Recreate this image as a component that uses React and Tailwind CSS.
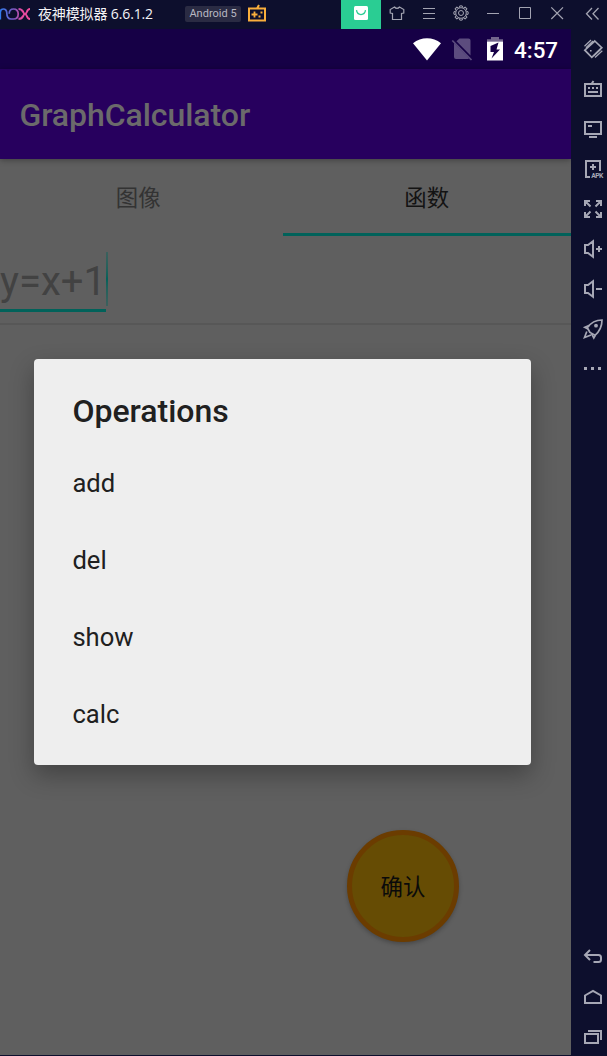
const OPERATIONS = ["add", "del", "show", "calc"];

function Glyph({ children, className = "" }) {
  return (
    <svg
      viewBox="0 0 20 20"
      className={`h-5 w-5 shrink-0 overflow-visible ${className}`}
      fill="none"
      stroke="#a6a7b5"
      strokeWidth="2"
    >
      {children}
    </svg>
  );
}

function SideCell({ children }) {
  return <div className="flex h-10 shrink-0 items-center pl-3">{children}</div>;
}

function TopCell({ children }) {
  return (
    <div className="flex h-[27px] w-8 shrink-0 items-center justify-center pb-px">
      <svg viewBox="0 0 16 16" className="h-4 w-4" fill="none" stroke="#a3a4b2" strokeWidth="1">
        {children}
      </svg>
    </div>
  );
}

function GearTeeth() {
  return [0, 45, 90, 135, 180, 225, 270, 315].map((a) => (
    <path key={a} d="M6.3 2.6L6.8 .9H9.2L9.7 2.6" transform={`rotate(${a} 8 8)`} />
  ));
}

function TitleBar() {
  return (
    <header className="flex h-[29px] w-full shrink-0 bg-[#0d0f2d]">
      <div className="flex h-[27px] w-[341px] items-center">
        <svg viewBox="0 0 30 12" className="h-3 w-[30px] shrink-0" fill="none" strokeWidth="1.7">
          <defs>
            <linearGradient id="nox" gradientUnits="userSpaceOnUse" x1="0" x2="30" y1="0" y2="0">
              <stop offset="0" stopColor="#2f7bf0" />
              <stop offset=".5" stopColor="#8355bd" />
              <stop offset=".7" stopColor="#e14aa0" />
              <stop offset="1" stopColor="#f34b9c" />
            </linearGradient>
          </defs>
          <g stroke="url(#nox)">
            <path d="M.3 11.5V4.5C.3 2 1.5 1 3.2 1C5.5 1 6.8 2.5 6.8 5C6.8 9 8.5 11 11 11H13.5C16.3 11 18.2 9 18.2 6S16.3 1 13.5 1C10.5 1 9.2 3 9.2 5.8" />
            <path d="M18.5 1C21.5 1 22.3 2 23.2 4C23.8 5.5 24.3 6 25 6C25.7 6 26.2 5.5 26.8 4C27.5 2 28.3 1 30 1M18.5 11C21.5 11 22.3 10 23.2 8C23.8 6.5 24.3 6 25 6C25.7 6 26.2 6.5 26.8 8C27.5 10 28.3 11 30 11" strokeWidth="2" />
          </g>
        </svg>
        <span className="ml-2 w-[147px] whitespace-nowrap font-['Open_Sans','Noto_Sans_CJK_SC',sans-serif] text-[14px] leading-5 tracking-[-0.13px] text-[#f4f4f7]">
          夜神模拟器 6.6.1.2
        </span>
        <span className="flex h-4 w-14 shrink-0 items-center justify-center rounded-[2px] bg-[#2a2b43] pt-px font-[Roboto,sans-serif] text-[11px] text-[#b8b8c2]">
          Android 5
        </span>
        <svg viewBox="0 0 20 18" className="mb-0.5 ml-1.5 h-[18px] w-5 shrink-0" fill="none" stroke="#f9ae3c" strokeWidth="2">
          <path d="M2 4.5H18V16.5H2ZM10 4.5L12 1" />
          <path d="M4.5 10.5H10.5M7.5 7.5V13.5" strokeWidth="1.8" />
          <path d="M13.5 8.5H15.5M11.5 12.5H13.5" />
        </svg>
      </div>
      <div className="flex h-[29px] w-10 shrink-0 justify-center bg-[#2acd93] pt-1.5">
        <svg viewBox="0 0 14 14" className="h-3.5 w-3.5">
          <rect width="14" height="14" rx="1.5" fill="#fff" />
          <path d="M2.5 4.2C3.3 10 10.7 10 11.5 4.2" fill="none" stroke="#2acd93" strokeWidth="1.3" />
        </svg>
      </div>
      <TopCell>
        <path d="M5.5 2L1.2 4.5V8L3.5 8.5V14.5H12.5V8.5L14.8 8V4.5L10.5 2C9 3.8 7 3.8 5.5 2Z" strokeWidth="1.2" />
      </TopCell>
      <TopCell>
        <path d="M2 3.5H14M2 8.5H14M2 13.5H14" />
      </TopCell>
      <TopCell>
        <circle cx="8" cy="8" r="5.3" />
        <circle cx="8" cy="8" r="2.5" />
        <GearTeeth />
      </TopCell>
      <TopCell>
        <path d="M2 8.5H14" />
      </TopCell>
      <TopCell>
        <path d="M2.5 2.5H13.5V13.5H2.5Z" />
      </TopCell>
      <TopCell>
        <path d="M2.3 2.3L14 14M14 2.3L2.3 14" strokeWidth="1.2" />
      </TopCell>
      <div className="flex h-[27px] items-center pl-[11px]">
        <svg viewBox="0 0 16 16" className="h-4 w-4" fill="none" stroke="#a3a4b2" strokeWidth="1.3">
          <path d="M8 2L2.5 7.7L8 13.5M14.5 2L9 7.7L14.5 13.5" />
        </svg>
      </div>
    </header>
  );
}

function StatusBar() {
  return (
    <div className="flex h-10 shrink-0 items-center bg-[#160046] pl-[413px]">
      <svg viewBox="0 0 28 23" className="h-[23px] w-7 shrink-0">
        <path d="M0 5.2C8-1.5 20-1.5 28 5.2L14 22.5Z" fill="#fff" />
      </svg>
      <svg viewBox="0 0 22 24" className="ml-[10px] h-6 w-[22px] shrink-0">
        <path d="M8.5 1.5H17.5Q19.5 1.5 19.5 3.5V18.5L5.5 4.3ZM3 6L18 21.2Q17.5 22 17 22H5Q3 22 3 20Z" fill="#5c4c7e" />
        <path d="M1.3 3.5L20.5 23" stroke="#5c4c7e" strokeWidth="1.7" />
      </svg>
      <svg viewBox="0 0 16 24" className="ml-[14px] h-6 w-4 shrink-0">
        <path d="M0 4.5V2.3H4V0H12V2.3H16V4.5Z" fill="#73668c" />
        <path d="M0 4.5H16V23.5H0Z" fill="#fff" />
        <path d="M11.5 5.5L3.5 9V15H7L4.5 21.5L13 12.5H9.5Z" fill="#160046" />
      </svg>
      <span className="ml-[11px] pt-px font-[Roboto,sans-serif] text-[22.4px] font-medium leading-6 text-white">4:57</span>
    </div>
  );
}

function Sidebar() {
  return (
    <aside className="flex w-9 shrink-0 flex-col overflow-hidden bg-[#0d0f2d]">
      <SideCell>
        <Glyph>
          <g strokeWidth="1.7">
            <path d="M11.8 2L18.8 8.7L8.8 18.3L1.8 11.2Z" />
            <path d="M1.5 7.2L8 1M3 8.7L10 2M12 18.5L19.3 11.8M10.5 17L17.5 10.5" strokeWidth="1.2" />
          </g>
          <path d="M7 11.7H8.6" strokeWidth="1.6" />
        </Glyph>
      </SideCell>
      <SideCell>
        <Glyph>
          <path d="M2 5H18V17H2ZM8.5 5L10.5 2" />
          <path d="M5 9H7M9 9H11M13 9H15M5 13H15" />
        </Glyph>
      </SideCell>
      <SideCell>
        <Glyph>
          <path d="M2 3H18V15H2ZM5 7H9M6 18H14" />
        </Glyph>
      </SideCell>
      <SideCell>
        <Glyph>
          <path d="M17 12V2H3V18H7M7 8H13M10 5V11" />
          <text x="8.3" y="19" fill="#a6a7b5" stroke="none" fontFamily="Roboto, sans-serif" fontSize="6.8" fontWeight="700" textLength="12">
            APK
          </text>
        </Glyph>
      </SideCell>
      <SideCell>
        <Glyph>
          <path d="M2 7V2H7M13 2H18V7M18 13V18H13M7 18H2V13M2 2L7.5 7.5M18 2L12.5 7.5M18 18L12.5 12.5M2 18L7.5 12.5" />
        </Glyph>
      </SideCell>
      <SideCell>
        <Glyph>
          <path d="M2 6H5L10 2.3V17.7L5 14H2ZM13 10H19M16 7V13" />
        </Glyph>
      </SideCell>
      <SideCell>
        <Glyph>
          <path d="M2 6H5L10 2.3V17.7L5 14H2ZM13 10H19" />
        </Glyph>
      </SideCell>
      <SideCell>
        <Glyph>
          <g strokeWidth="1.7">
            <path d="M7 13.5L4.3 8.7C8 3.5 12 1 19 1C19 7.5 17 12 12 16.3Z" />
            <path d="M6.5 6.3L1.8 8.3L5 10M12.3 16.3L10.8 19L8.5 14.6M3.8 12.5L1.5 18.5L8 16" />
          </g>
          <circle cx="13" cy="6.7" r="1.9" fill="#a6a7b5" stroke="none" />
        </Glyph>
      </SideCell>
      <SideCell>
        <Glyph>
          <path d="M1 9.5H4M8 9.5H11M15 9.5H18" strokeWidth="3" />
        </Glyph>
      </SideCell>
      <div className="h-[548px] shrink-0" />
      <SideCell>
        <Glyph>
          <path d="M7 3L2 8L7 13M2 8H15.5Q18 8 18 10.5V12.5Q18 15 15.5 15H10.5" />
        </Glyph>
      </SideCell>
      <SideCell>
        <Glyph>
          <path d="M2 8.5L10 4L18 8.5V16H2Z" />
        </Glyph>
      </SideCell>
      <SideCell>
        <Glyph>
          <path d="M2 7H15V16H2ZM5 4H18V13" />
        </Glyph>
      </SideCell>
    </aside>
  );
}

function OperationsDialog() {
  return (
    <div
      role="dialog"
      className="absolute left-[34px] top-[330px] h-[406px] w-[497px] rounded-[4px] bg-[#eeeeee] px-[38.4px] pt-[33px] font-[Roboto,sans-serif] text-[#202020] shadow-[0_10px_24px_0_rgba(0,0,0,0.3)]"
    >
      <h2 className="text-[32px] font-medium leading-[38px]">Operations</h2>
      <ul className="pt-[15px] text-[25.6px]">
        {OPERATIONS.map((name) => (
          <li key={name} className="flex h-[76.8px] items-center">
            {name}
          </li>
        ))}
      </ul>
    </div>
  );
}

function Phone() {
  return (
    <main className="relative flex h-[1026px] w-[571px] shrink-0 flex-col overflow-hidden bg-[#5f5f5f]">
      <StatusBar />
      <div className="z-10 flex h-[90px] shrink-0 items-center bg-[#27005e] pl-[19.4px] pt-0.5 font-[Roboto,sans-serif] text-[32px] font-medium tracking-[-0.05px] text-[#6b6a6b] shadow-[0_1px_6px_rgba(0,0,0,0.35)]">
        GraphCalculator
      </div>
      <nav className="flex h-[77px] shrink-0 font-['Noto_Sans_CJK_SC',sans-serif] text-[22.4px]">
        <div className="flex w-[282.5px] items-center justify-center pb-0.5 pr-1.5 text-[#333333]">图像</div>
        <div className="flex flex-1 items-center justify-center border-b-[3px] border-[#01625a] pt-px text-[#131313]">函数</div>
      </nav>
      <div className="flex h-[89px] shrink-0 items-start border-b-2 border-[#575757] pt-4">
        <div className="flex h-[60px] w-[106px] items-end whitespace-nowrap border-b-[3px] border-[#01625a] pb-[7px] font-[Roboto,sans-serif] text-[40px] leading-none text-[#424242]">
          y=x+1
        </div>
        <div className="h-[54px] w-[2px] bg-linear-to-b from-[#3c605d] via-[#01625a] to-[#3c605d]" />
      </div>
      <button className="ml-[347px] mt-[505px] flex h-28 w-28 shrink-0 items-center justify-center rounded-full border-[5px] border-[#6b3c00] bg-[#664c04] font-['Noto_Sans_CJK_SC',sans-serif] text-[22.4px] text-[#0a0a0a] shadow-[0_2px_4px_rgba(0,0,0,0.25)]">
        确认
      </button>
      <OperationsDialog />
    </main>
  );
}

export default function App() {
  return (
    <div className="flex h-[1056px] w-[607px] flex-col overflow-hidden bg-[#0d0f2d]">
      <TitleBar />
      <div className="flex h-[1027px]">
        <Phone />
        <Sidebar />
      </div>
    </div>
  );
}
